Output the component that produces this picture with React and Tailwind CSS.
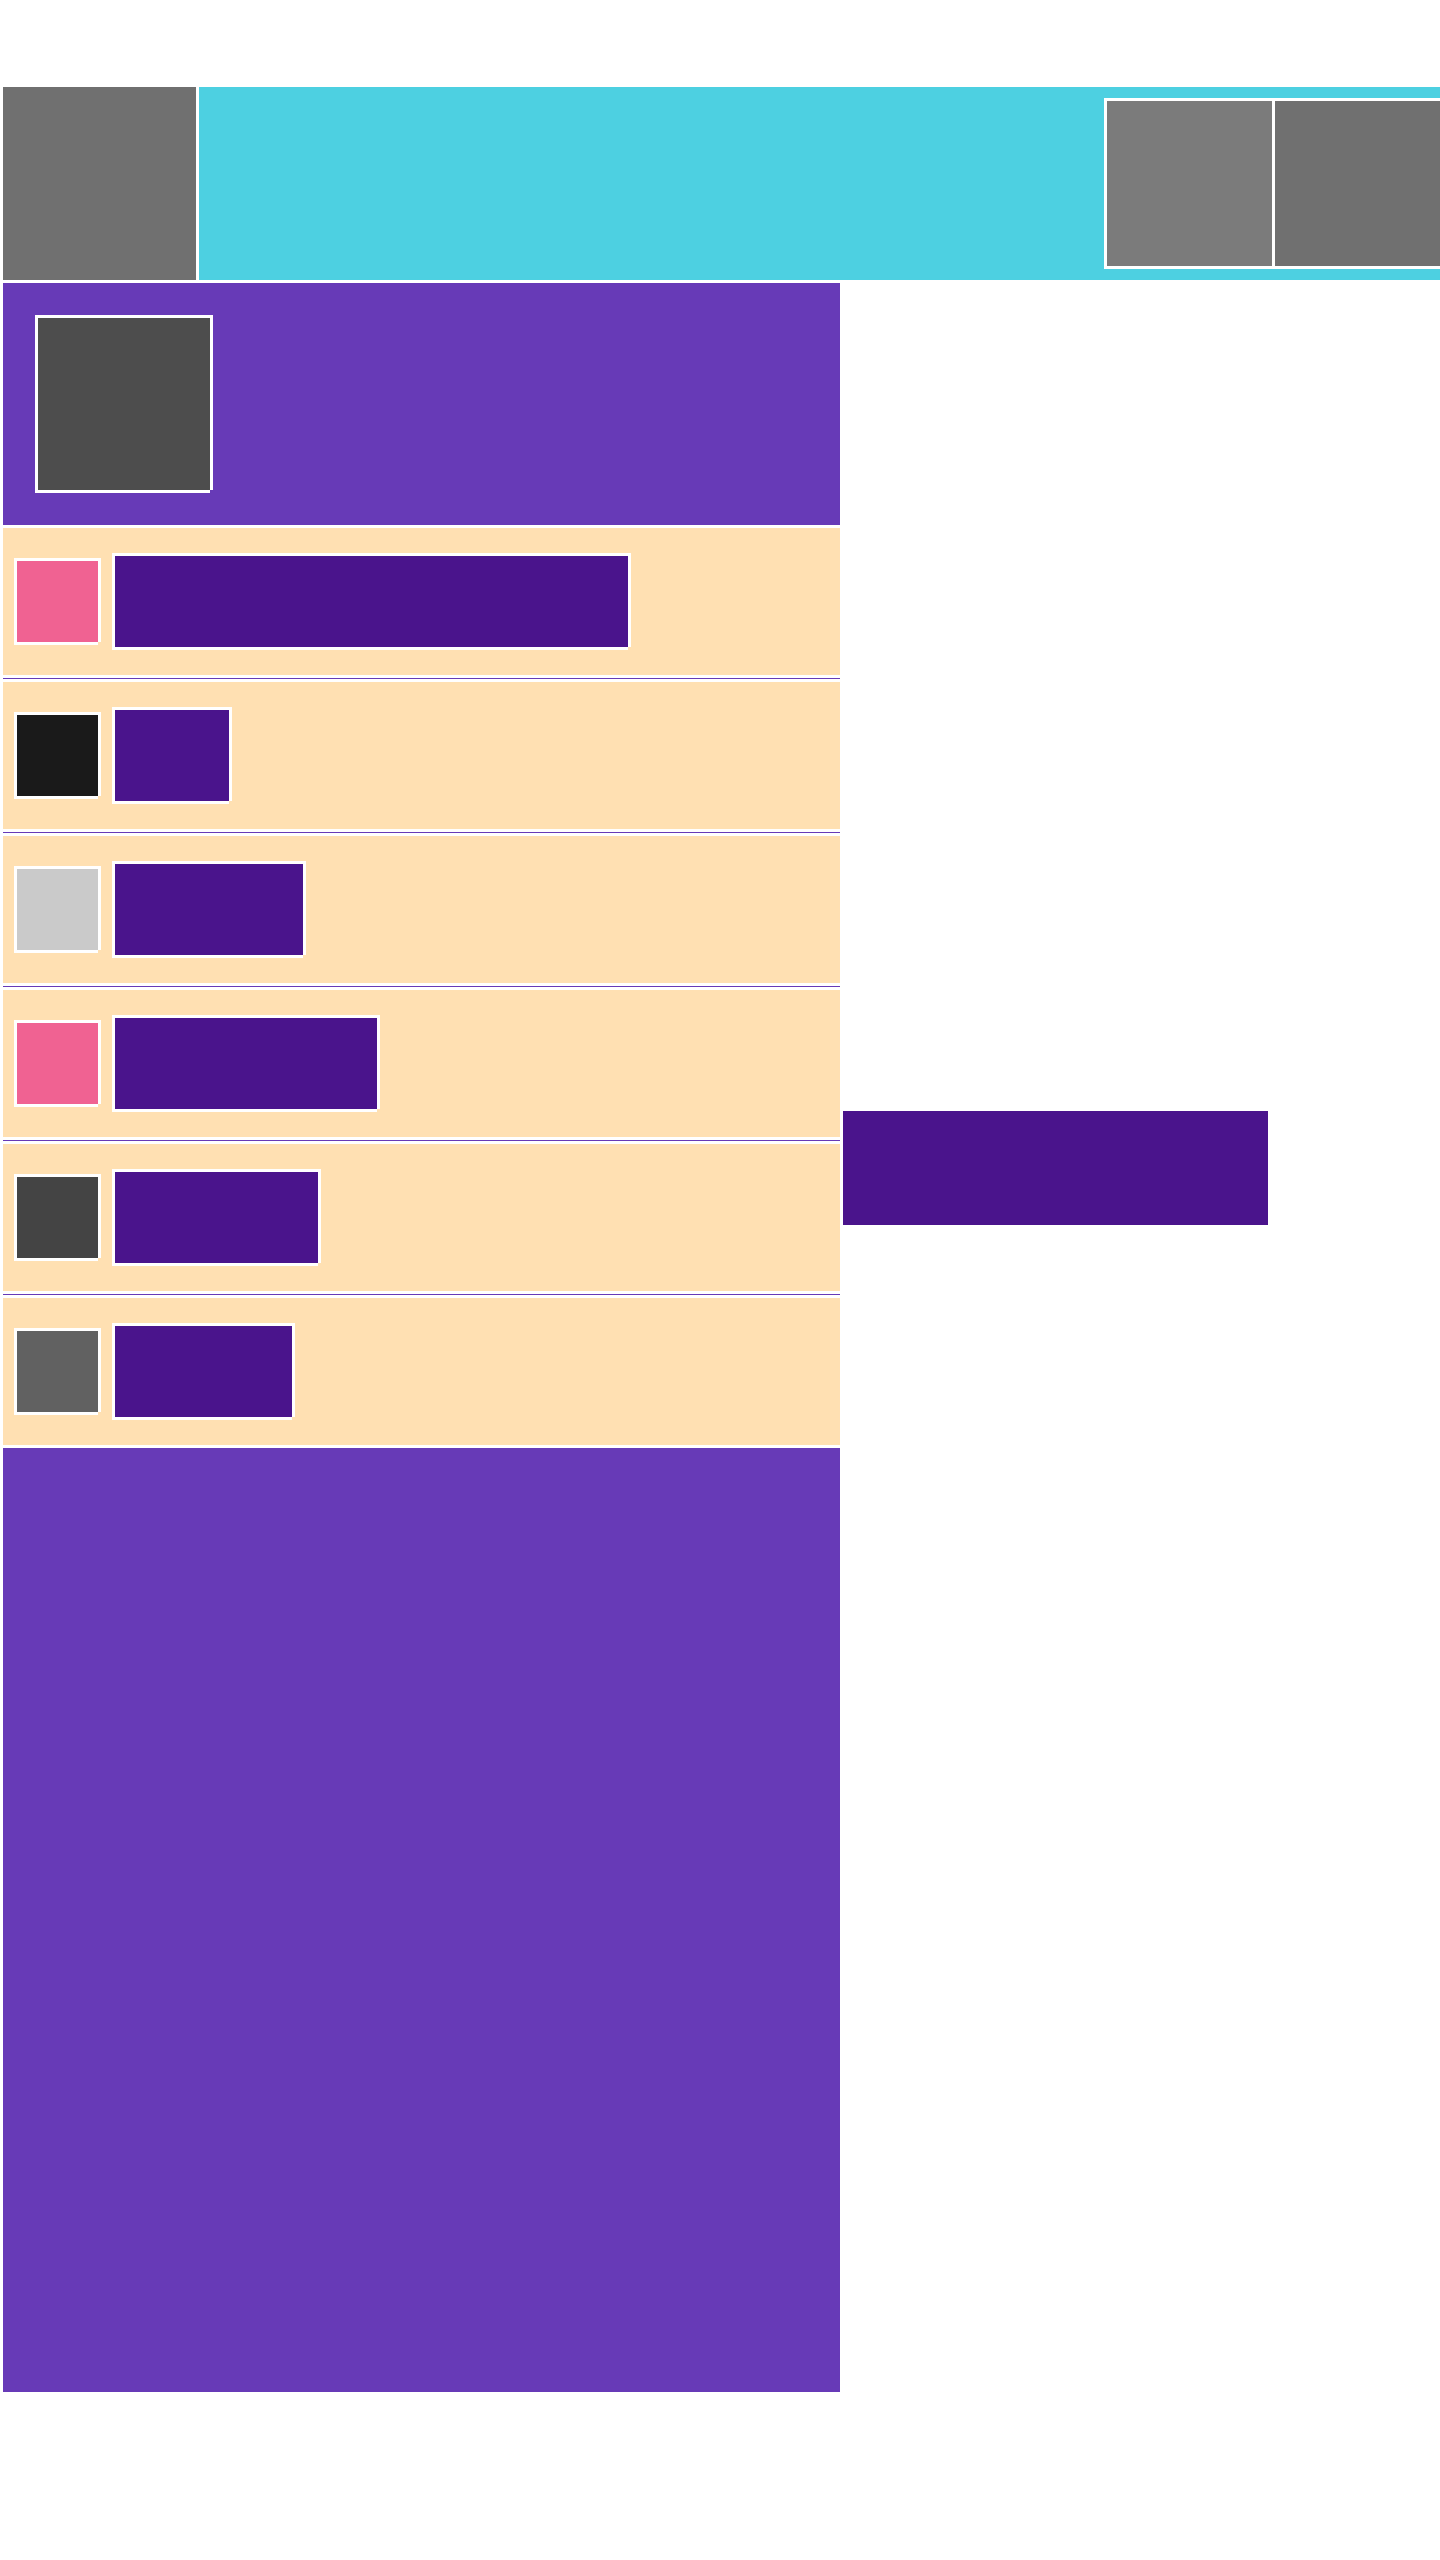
import React from 'react';

// square or bar with the white frame on left/top and a flat white shadow right/bottom
const Tile = ({ className }) => (
  <div
    className={`shrink-0 border-l-[3px] border-t-[3px] border-white mr-[3px] mb-[3px] shadow-[3px_0_0_0_#fff,0_3px_0_0_#fff] ${className}`}
  />
);

const rows = [
  { swatch: 'bg-[#f06292]', bar: 'w-[516px]' },
  { swatch: 'bg-[#1a1a1a]', bar: 'w-[117px]' },
  { swatch: 'bg-[#cacaca]', bar: 'w-[191px]' },
  { swatch: 'bg-[#f06292]', bar: 'w-[265px]' },
  { swatch: 'bg-[#444444]', bar: 'w-[206px]' },
  { swatch: 'bg-[#616161]', bar: 'w-[180px]' }
];

const App = () => {
  return (
    <div className="min-h-screen bg-white pt-[87px]">
      {/* Header */}
      <div className="flex h-[193px] gap-[3px] pl-[3px]">
        <div className="w-[193px] shrink-0 bg-[#707070]" />
        <div className="flex flex-1 items-center overflow-hidden bg-[#4dd0e1]">
          <div className="ml-auto mr-[-3px] flex gap-[3px] bg-white p-[3px]">
            <div className="h-[165px] w-[165px] bg-[#7b7b7b]" />
            <div className="h-[165px] w-[165px] bg-[#707070]" />
          </div>
        </div>
      </div>

      {/* Content */}
      <div className="mt-[3px] flex pl-[3px]">
        <div className="flex w-[837px] shrink-0 flex-col">
          <div className="flex h-[242px] items-start bg-[#673ab7] p-[32px]">
            <Tile className="h-[175px] w-[175px] bg-[#4d4d4d]" />
          </div>

          <div className="mt-[3px] flex flex-col">
            {rows.map((row, idx) => (
              <div key={idx}>
                <div className="flex h-[147px] items-center gap-[11px] bg-[#ffe0b2] pl-[11px]">
                  <Tile className={`h-[84px] w-[84px] ${row.swatch}`} />
                  <Tile className={`h-[94px] bg-[#4a148c] ${row.bar}`} />
                </div>
                {idx < rows.length - 1 && (
                  <div className="flex h-[7px] items-center">
                    <div className="h-px w-full bg-[#673ab7]" />
                  </div>
                )}
              </div>
            ))}
          </div>

          <div className="mt-[3px] h-[944px] bg-[#673ab7]" />
        </div>

        <div className="ml-[3px] flex-1">
          <div className="mt-[828px] h-[114px] w-[425px] bg-[#4a148c]" />
        </div>
      </div>
    </div>
  );
};

export default App;
